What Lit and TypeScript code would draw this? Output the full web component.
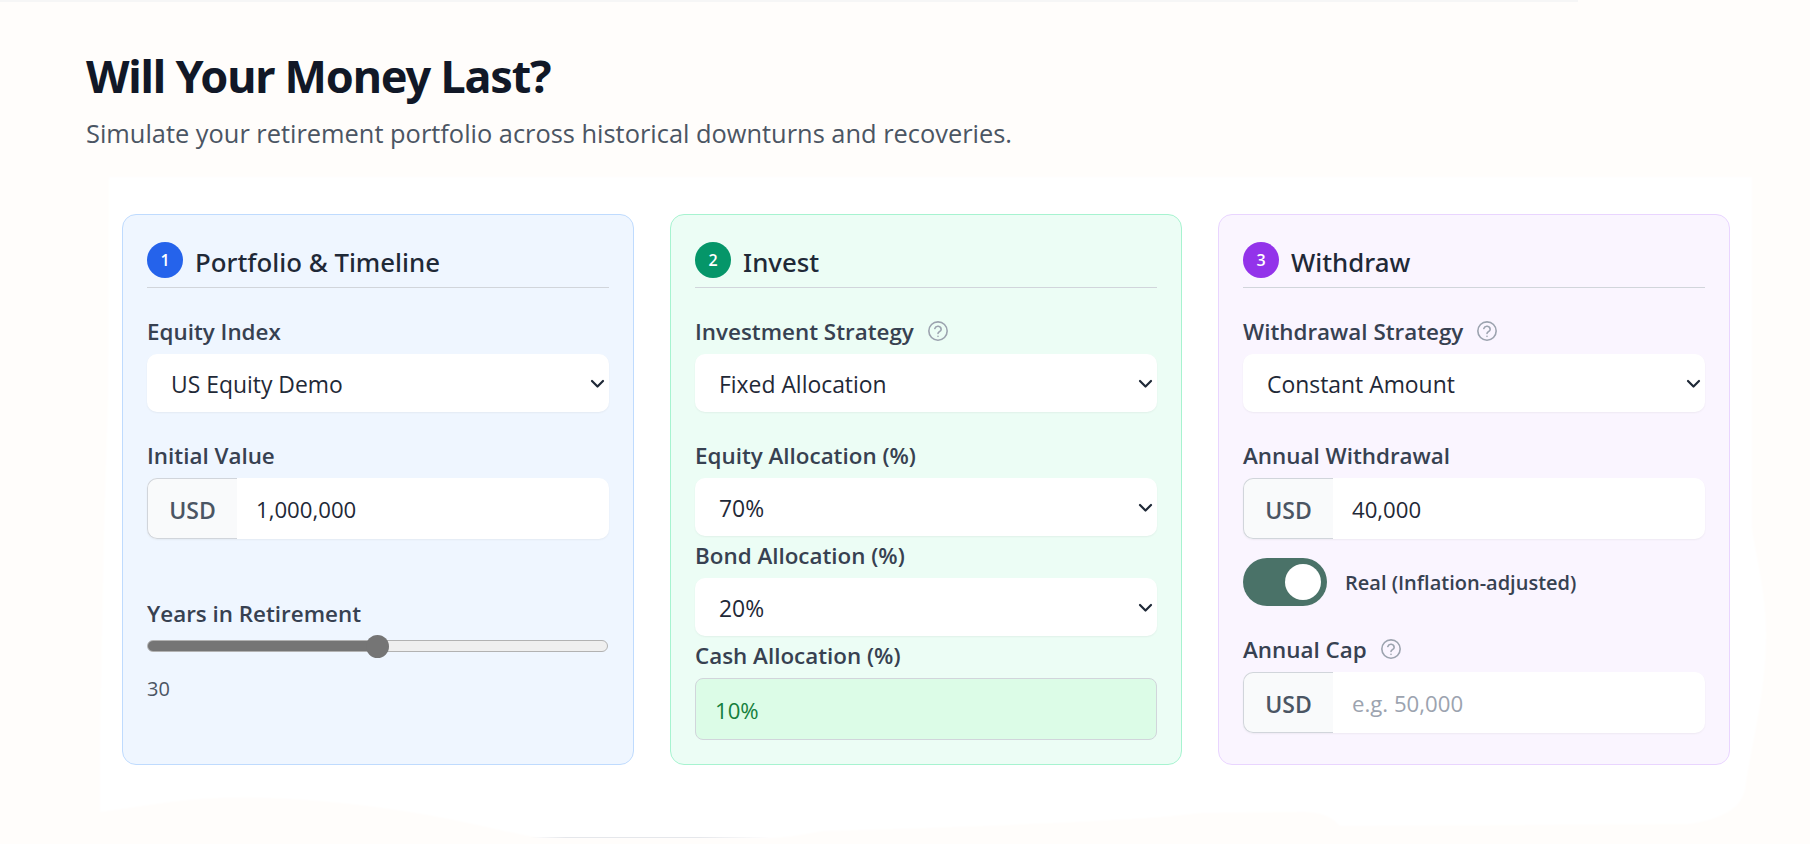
import { LitElement, html, css, svg } from "lit";
import { customElement } from "lit/decorators.js";

const help = html`<svg class="help" viewBox="0 0 24 24" fill="none" stroke="currentColor" stroke-width="1.9" stroke-linecap="round" stroke-linejoin="round"><circle cx="12" cy="12" r="11"/><path d="M8.2 9a3.9 3.9 0 0 1 7.6 1.1c0 2.5-3.8 2.9-3.8 4.9"/><path d="M12 18.4h.01"/></svg>`;
const chev = svg`<path d="M2 2l5.5 5.5L13 2" fill="none" stroke="currentColor" stroke-width="2.2" stroke-linecap="round" stroke-linejoin="round"/>`;

@customElement("app-root")
export class AppRoot extends LitElement {
  static styles = css`
    :host { display: block; height: 844px; background: #fffdfb; font-family: "Open Sans", "Noto Sans", sans-serif; color: #374151; overflow: hidden; position: relative; }
    * { box-sizing: border-box; }
    .bg { position: absolute; left: 0; top: 0; width: 1810px; height: 844px; filter: blur(0.8px); }
    .bottomline { position: absolute; left: 530px; top: 837px; width: 240px; height: 1px; background: linear-gradient(to right, transparent, #e5e7eb 15%, #e5e7eb 70%, transparent); }
    .content { position: relative; }
    .topline { height: 2px; width: 1578px; background: #f6f6f6; }
    .head { height: 175px; padding: 39px 0 0 86px; }
    h1 { margin: 0; font-family: "Noto Sans", "Open Sans", sans-serif; font-size: 45px; line-height: 70px; font-weight: 700; color: #111827; letter-spacing: -1.2px; font-stretch: 90%; }
    .sub { margin: 3px 0 0; font-size: 25.4px; line-height: 38px; color: #4b5563; }
    .cols { display: grid; grid-template-columns: repeat(3, 512px); gap: 36px; padding: 37px 0 0 122px; }
    .card { height: 551px; border: 1px solid; border-radius: 14px; padding: 27px 24px 0; display: flex; flex-direction: column; }
    .blue { background: #eff6ff; border-color: #bfdbfe; }
    .green { background: #ecfdf5; border-color: #a7f3d0; }
    .purple { background: #faf5ff; border-color: #e9d5ff; }
    .title { display: flex; align-items: center; gap: 12px; height: 46px; padding-bottom: 9px; border-bottom: 1px solid #d1d5db; }
    .num { width: 36px; height: 36px; border-radius: 50%; color: #fff; font-size: 16px; font-weight: 600; display: flex; align-items: center; justify-content: center; }
    .blue .num { background: #2563eb; }
    .green .num { background: #059669; }
    .purple .num { background: #9333ea; }
    h2 { margin: 0; font-family: "Noto Sans", "Open Sans", sans-serif; font-size: 25.8px; font-weight: 500; color: #1f2937; line-height: 36px; padding-top: 3px; }
    .lbl { display: flex; align-items: center; gap: 14px; font-size: 22.4px; font-weight: 600; color: #374151; line-height: 32px; height: 32px; margin: 0 0 6px; }
    .help { width: 20px; height: 20px; color: #9ca3af; margin-bottom: 3px; }
    .sel { position: relative; height: 58px; background: #fff; border-radius: 10px; box-shadow: 0 1px 2px rgba(0,0,0,.05); flex: none; }
    select { appearance: none; width: 100%; height: 100%; border: 0; background: transparent; padding: 2px 24px 0; font: inherit; font-size: 22.9px; color: #1f2937; outline: none; }
    .chev { position: absolute; right: 4px; top: 25px; width: 15px; height: 10px; color: #1f2937; pointer-events: none; }
    .group { display: flex; height: 61px; border-radius: 10px; background: #fff; box-shadow: 0 1px 2px rgba(0,0,0,.05); flex: none; }
    .addon { width: 90px; flex: none; background: #f9fafb; border: 1px solid #d1d5db; border-right: 0; border-radius: 10px 0 0 10px; display: flex; align-items: center; justify-content: center; padding-top: 2px; font-size: 23px; font-weight: 600; color: #4b5563; }
    input.text { flex: 1; min-width: 0; border: 0; background: transparent; padding: 2px 19px 0; font: inherit; font-size: 22.2px; color: #1f2937; outline: none; }
    input.text::placeholder { color: #9ca3af; opacity: 1; }
    .g1 { margin-top: 28px; }
    .g2 { margin-top: 28px; }
    .g3 { margin-top: 4px; }
    .years { margin-top: 59px; }
    .cap { margin-top: 28px; }
    .range { -webkit-appearance: none; appearance: none; display: block; width: 461px; height: 23px; margin: -1.5px 0 0 0; padding: 0; background: transparent; flex: none; }
    .range::-webkit-slider-runnable-track { height: 12px; border-radius: 6px; border: 1px solid #b2b2b2; background: linear-gradient(to right, #757575 50%, #efefef 50%); }
    .range::-webkit-slider-thumb { -webkit-appearance: none; width: 23px; height: 23px; border-radius: 50%; background: #757575; margin-top: -6.5px; }
    .val { font-size: 20px; color: #4b5563; line-height: 28px; margin-top: 17px; }
    .cash { height: 62px; border: 1px solid #d1d5db; border-radius: 8px; background: #dcfce7; color: #15803d; font-size: 22.2px; padding: 2px 0 0 19px; display: flex; align-items: center; flex: none; }
    .toggle-row { display: flex; align-items: center; gap: 18px; height: 48px; margin-top: 19px; flex: none; }
    .toggle { width: 84px; height: 48px; border-radius: 24px; background: #4a7268; display: flex; align-items: center; justify-content: flex-end; padding-right: 6px; flex: none; }
    .knob { width: 36px; height: 36px; border-radius: 50%; background: #fff; }
    .toggle-text { font-size: 20px; font-weight: 600; color: #374151; }
  `;

  private sel(v: string) {
    return html`<div class="sel"><select><option>${v}</option></select><svg class="chev" viewBox="0 0 15 10">${chev}</svg></div>`;
  }

  render() {
    return html`
      <svg class="bg" viewBox="0 0 1810 844"><path fill="#fff" d="M109 177H1752V530C1758 565 1767 600 1766 640C1765 700 1750 750 1745 790C1740 808 1725 818 1690 824L1340 826C1330 815 1320 812 1300 812L1200 813C1150 820 1000 826 822 831C800 835 790 837 770 838H540C500 832 440 812 330 802C280 797 220 795 170 802L100 812V740L104 530L108 400Z"/></svg>
      <div class="bottomline"></div>
      <div class="content">
        <div class="topline"></div>
        <div class="head">
          <h1>Will Your Money Last?</h1>
          <p class="sub">Simulate your retirement portfolio across historical downturns and recoveries.</p>
        </div>
        <div class="cols">
          <section class="card blue">
            <div class="title"><span class="num">1</span><h2>Portfolio &amp; Timeline</h2></div>
            <div class="lbl g1">Equity Index</div>
            ${this.sel("US Equity Demo")}
            <div class="lbl g2">Initial Value</div>
            <div class="group"><span class="addon">USD</span><input class="text" value="1,000,000" /></div>
            <div class="lbl years">Years in Retirement</div>
            <input class="range" type="range" min="0" max="60" value="30" />
            <div class="val">30</div>
          </section>
          <section class="card green">
            <div class="title"><span class="num">2</span><h2>Invest</h2></div>
            <div class="lbl g1">Investment Strategy ${help}</div>
            ${this.sel("Fixed Allocation")}
            <div class="lbl g2">Equity Allocation (%)</div>
            ${this.sel("70%")}
            <div class="lbl g3">Bond Allocation (%)</div>
            ${this.sel("20%")}
            <div class="lbl g3">Cash Allocation (%)</div>
            <div class="cash">10%</div>
          </section>
          <section class="card purple">
            <div class="title"><span class="num">3</span><h2>Withdraw</h2></div>
            <div class="lbl g1">Withdrawal Strategy ${help}</div>
            ${this.sel("Constant Amount")}
            <div class="lbl g2">Annual Withdrawal</div>
            <div class="group"><span class="addon">USD</span><input class="text" value="40,000" /></div>
            <div class="toggle-row"><span class="toggle"><span class="knob"></span></span><span class="toggle-text">Real (Inflation-adjusted)</span></div>
            <div class="lbl cap">Annual Cap ${help}</div>
            <div class="group"><span class="addon">USD</span><input class="text" placeholder="e.g. 50,000" /></div>
          </section>
        </div>
      </div>
    `;
  }
}
